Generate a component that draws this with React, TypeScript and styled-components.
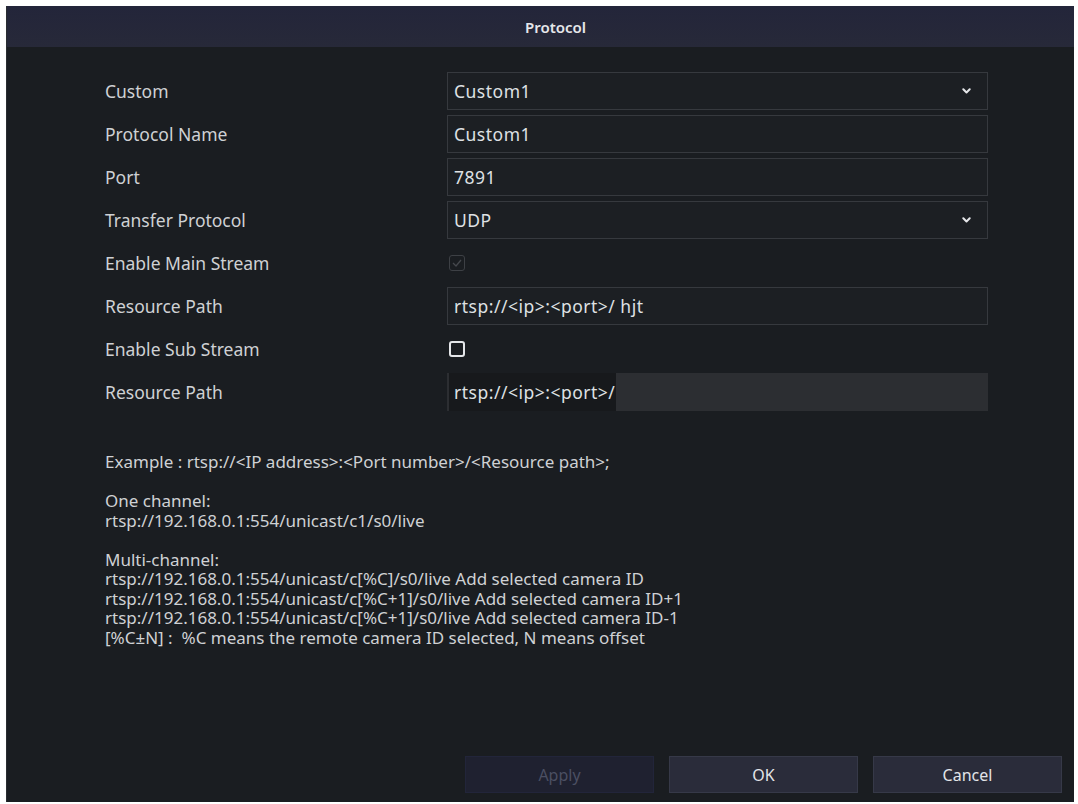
import styled, { createGlobalStyle } from "styled-components";

const GlobalStyle = createGlobalStyle`
  html, body {
    margin: 0;
    padding: 0;
    background: #ffffff;
  }
  body {
    font-family: "Noto Sans", "Open Sans", sans-serif;
  }
`;

const Page = styled.div`
  width: 1078px;
  height: 804px;
  box-sizing: border-box;
  padding: 6px 4px 2px 6px;
`;

const Dialog = styled.div`
  height: 100%;
  display: flex;
  flex-direction: column;
  background: #1a1d21;
  border-left: 1px solid #2a2d31;
`;

const Header = styled.div`
  height: 41px;
  flex-shrink: 0;
  display: flex;
  align-items: center;
  justify-content: center;
  padding-left: 30px;
  background: linear-gradient(180deg, #23253a 0%, #272939 100%);
  color: #e6e7ea;
  font-size: 15px;
  font-weight: 600;
`;

const Form = styled.div`
  display: grid;
  grid-template-columns: 342px 541px;
  grid-auto-rows: 38px;
  row-gap: 5px;
  padding: 25px 0 0 98px;
`;

const Label = styled.div`
  display: flex;
  align-items: center;
  color: #cfd1d4;
  font-size: 17.5px;
`;

const Field = styled.div<{ $filled?: boolean }>`
  display: flex;
  align-items: center;
  justify-content: space-between;
  box-sizing: border-box;
  padding: 0 16px 0 6px;
  border: 1px solid ${(p) => (p.$filled ? "#2c2e32" : "#36393e")};
  background: ${(p) => (p.$filled ? "#2c2e32" : "#1c1f23")};
  color: #dfe1e4;
  font-size: 17.5px;
  letter-spacing: 0.5px;
`;

const Highlight = styled.span`
  margin-left: -5px;
  padding: 7px 1px 7px 5px;
  background: #17191c;
`;

const CheckCell = styled.div`
  display: flex;
  align-items: center;
  padding-left: 2px;
`;

const Box = styled.div<{ $disabled?: boolean }>`
  width: 16px;
  height: 16px;
  box-sizing: border-box;
  border: ${(p) => (p.$disabled ? "1.5px solid #3d4045" : "2px solid #e4e6e9")};
  border-radius: 3px;
  display: flex;
  align-items: center;
  justify-content: center;
`;

const Help = styled.div`
  flex: 1;
  padding: 41px 0 0 98px;
  color: #cfd1d4;
  font-size: 17px;
  line-height: 19.5px;
  white-space: pre;
`;

const Footer = styled.div`
  display: flex;
  justify-content: flex-end;
  gap: 15px;
  padding: 0 12px 9px 0;
`;

const Button = styled.button<{ $disabled?: boolean }>`
  width: 189px;
  height: 37px;
  border: 1px solid ${(p) => (p.$disabled ? "#22253a" : "#363948")};
  background: ${(p) => (p.$disabled ? "#1f2130" : "#2a2c3a")};
  color: ${(p) => (p.$disabled ? "#4b4f62" : "#e2e4e8")};
  font-family: inherit;
  font-size: 16px;
  cursor: pointer;
`;

const Chevron = () => (
  <svg width="9" height="6" viewBox="0 0 9 6">
    <polyline
      points="1.3,1.3 4.5,4.5 7.7,1.3"
      fill="none"
      stroke="#e6e7ea"
      strokeWidth="2"
      strokeLinecap="round"
      strokeLinejoin="round"
    />
  </svg>
);

const Tick = () => (
  <svg width="10" height="8" viewBox="0 0 10 8">
    <polyline
      points="1,4 4,7 9,1"
      fill="none"
      stroke="#45484d"
      strokeWidth="1.3"
    />
  </svg>
);

const helpText = `Example : rtsp://<IP address>:<Port number>/<Resource path>;

One channel:
rtsp://192.168.0.1:554/unicast/c1/s0/live

Multi-channel:
rtsp://192.168.0.1:554/unicast/c[%C]/s0/live Add selected camera ID
rtsp://192.168.0.1:554/unicast/c[%C+1]/s0/live Add selected camera ID+1
rtsp://192.168.0.1:554/unicast/c[%C+1]/s0/live Add selected camera ID-1
[%C±N] :  %C means the remote camera ID selected, N means offset`;

const App = () => {
  return (
    <>
      <GlobalStyle />
      <Page>
        <Dialog>
          <Header>Protocol</Header>
          <Form>
            <Label>Custom</Label>
            <Field>
              Custom1
              <Chevron />
            </Field>
            <Label>Protocol Name</Label>
            <Field>Custom1</Field>
            <Label>Port</Label>
            <Field>7891</Field>
            <Label>Transfer Protocol</Label>
            <Field>
              UDP
              <Chevron />
            </Field>
            <Label>Enable Main Stream</Label>
            <CheckCell>
              <Box $disabled>
                <Tick />
              </Box>
            </CheckCell>
            <Label>Resource Path</Label>
            <Field>rtsp://&lt;ip&gt;:&lt;port&gt;/ hjt</Field>
            <Label>Enable Sub Stream</Label>
            <CheckCell>
              <Box />
            </CheckCell>
            <Label>Resource Path</Label>
            <Field $filled>
              <Highlight>rtsp://&lt;ip&gt;:&lt;port&gt;/</Highlight>
            </Field>
          </Form>
          <Help>{helpText}</Help>
          <Footer>
            <Button $disabled>Apply</Button>
            <Button>OK</Button>
            <Button>Cancel</Button>
          </Footer>
        </Dialog>
      </Page>
    </>
  );
};

export default App;
